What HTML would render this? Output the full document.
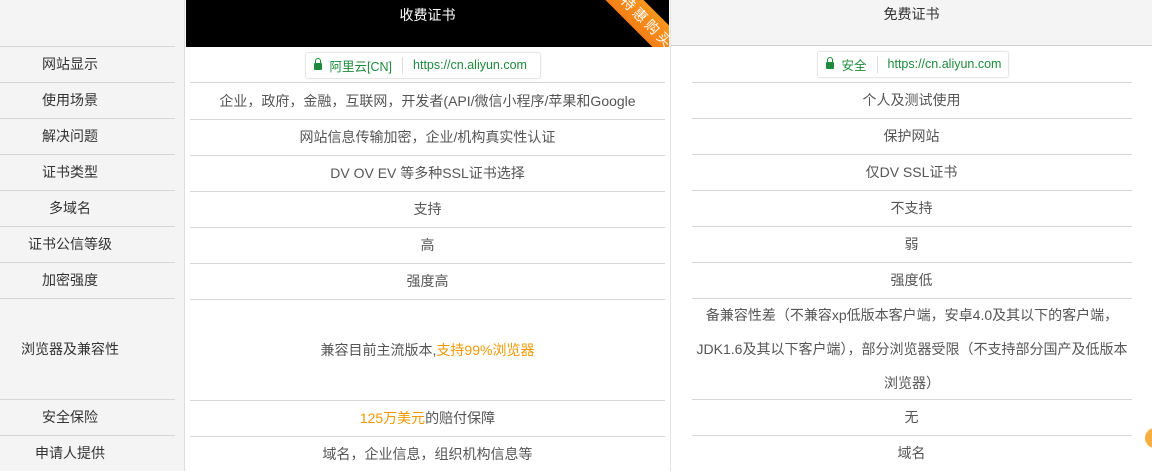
<!DOCTYPE html>
<html><head><meta charset="utf-8"><style>
*{margin:0;padding:0;box-sizing:border-box}
body{width:1152px;height:471px;overflow:hidden;background:#fff;font-family:"Liberation Sans","Noto Sans CJK SC",sans-serif;font-size:14px;color:#555;position:relative}
.col{position:absolute;top:0;height:471px}
#l{left:0;width:185px;background:#f4f4f4;border-right:1px solid #ddd}
#m{left:186px;width:483px;background:#fff}
#r{left:670px;width:482px;background:#fff;border-left:1px solid #e4e4e4}
.c{position:absolute;display:flex;align-items:center;justify-content:center;text-align:center;color:#555}
.ln{position:absolute;height:1px;background:#d6d6d6}
.o{color:#f39800}
.bar{display:inline-flex;align-items:center;height:27px;border:1px solid #e6e6e6;border-radius:3px;padding:0 8px;font-size:12.5px;color:#1e8a3c;white-space:nowrap;box-shadow:0 0 2px rgba(0,0,0,.05)}
.lock{display:inline-block;flex:none;width:8px;height:7px;background:#1e8a3c;border-radius:1px;position:relative;margin-right:8px;margin-top:3px}
.lock:before{content:"";position:absolute;left:1px;top:-5px;width:4px;height:5px;border:1.5px solid #1e8a3c;border-bottom:none;border-radius:3px 3px 0 0}
.sep{flex:none;width:1px;height:17px;background:#ddd;margin:0 10px}
</style></head><body>
<div class="col" id="l"></div>
<div class="col" id="m"></div>
<div class="col" id="r"></div>
<div style="position:absolute;left:186px;top:0;width:483px;height:47px;background:#000;overflow:hidden">
<div style="position:absolute;left:0;top:0;width:483px;height:30px;display:flex;align-items:center;justify-content:center;color:#fff;font-size:14px">收费证书</div>
<div style="position:absolute;left:396px;top:9px;width:130px;height:27px;background:linear-gradient(#f9961c,#f57f17);transform:rotate(45deg);color:#fff;font-size:14px;text-align:center;line-height:27px;letter-spacing:3px">特惠购买</div>
</div>
<div style="position:absolute;left:671px;top:0;width:481px;height:46px;background:#f4f4f4;border-bottom:1px solid #d0d0d0"></div>
<div class="c" style="left:671px;top:0;width:481px;height:28px;color:#333">免费证书</div>
<div class="ln" style="left:0;width:175px;top:46px"></div>
<div class="ln" style="left:0;width:175px;top:82px"></div>
<div class="ln" style="left:0;width:175px;top:118px"></div>
<div class="ln" style="left:0;width:175px;top:154px"></div>
<div class="ln" style="left:0;width:175px;top:190px"></div>
<div class="ln" style="left:0;width:175px;top:226px"></div>
<div class="ln" style="left:0;width:175px;top:262px"></div>
<div class="ln" style="left:0;width:175px;top:298px"></div>
<div class="ln" style="left:0;width:175px;top:399px"></div>
<div class="ln" style="left:0;width:175px;top:435px"></div>
<div class="ln" style="left:190px;width:475px;top:82px"></div>
<div class="ln" style="left:190px;width:475px;top:119px"></div>
<div class="ln" style="left:190px;width:475px;top:155px"></div>
<div class="ln" style="left:190px;width:475px;top:191px"></div>
<div class="ln" style="left:190px;width:475px;top:227px"></div>
<div class="ln" style="left:190px;width:475px;top:263px"></div>
<div class="ln" style="left:190px;width:475px;top:299px"></div>
<div class="ln" style="left:190px;width:475px;top:400px"></div>
<div class="ln" style="left:190px;width:475px;top:436px"></div>
<div class="ln" style="left:692px;width:440px;top:82px"></div>
<div class="ln" style="left:692px;width:440px;top:118px"></div>
<div class="ln" style="left:692px;width:440px;top:154px"></div>
<div class="ln" style="left:692px;width:440px;top:190px"></div>
<div class="ln" style="left:692px;width:440px;top:226px"></div>
<div class="ln" style="left:692px;width:440px;top:262px"></div>
<div class="ln" style="left:692px;width:440px;top:298px"></div>
<div class="ln" style="left:692px;width:440px;top:399px"></div>
<div class="ln" style="left:692px;width:440px;top:435px"></div>
<div class="c" style="left:0;width:140px;top:46px;height:36px;color:#333">网站显示</div>
<div class="c" style="left:0;width:140px;top:82px;height:36px;color:#333">使用场景</div>
<div class="c" style="left:0;width:140px;top:118px;height:36px;color:#333">解决问题</div>
<div class="c" style="left:0;width:140px;top:154px;height:36px;color:#333">证书类型</div>
<div class="c" style="left:0;width:140px;top:190px;height:36px;color:#333">多域名</div>
<div class="c" style="left:0;width:140px;top:226px;height:36px;color:#333">证书公信等级</div>
<div class="c" style="left:0;width:140px;top:262px;height:36px;color:#333">加密强度</div>
<div class="c" style="left:0;width:140px;top:298px;height:101px;color:#333">浏览器及兼容性</div>
<div class="c" style="left:0;width:140px;top:399px;height:36px;color:#333">安全保险</div>
<div class="c" style="left:0;width:140px;top:435px;height:36px;color:#333">申请人提供</div>
<div class="c" style="left:186px;width:483px;top:47px;height:36px"><span class="bar" style="width:236px;margin-right:10px"><span class="lock"></span>阿里云[CN]<span class="sep"></span>https://cn.aliyun.com</span></div>
<div class="c" style="left:186px;width:483px;top:82px;height:37px">企业，政府，金融，互联网，开发者(API/微信小程序/苹果和Google</div>
<div class="c" style="left:186px;width:483px;top:119px;height:36px">网站信息传输加密，企业/机构真实性认证</div>
<div class="c" style="left:186px;width:483px;top:155px;height:36px">DV OV EV 等多种SSL证书选择</div>
<div class="c" style="left:186px;width:483px;top:191px;height:36px">支持</div>
<div class="c" style="left:186px;width:483px;top:227px;height:36px">高</div>
<div class="c" style="left:186px;width:483px;top:263px;height:36px">强度高</div>
<div class="c" style="left:186px;width:483px;top:299px;height:101px">兼容目前主流版本,<span class="o">支持99%浏览器</span></div>
<div class="c" style="left:186px;width:483px;top:400px;height:36px"><span class="o">125万美元</span>的赔付保障</div>
<div class="c" style="left:186px;width:483px;top:436px;height:36px">域名，企业信息，组织机构信息等</div>
<div class="c" style="left:671px;width:481px;top:46px;height:36px"><span class="bar" style="width:192px;margin-left:2px"><span class="lock"></span>安全<span class="sep"></span>https://cn.aliyun.com</span></div>
<div class="c" style="left:671px;width:481px;top:82px;height:36px">个人及测试使用</div>
<div class="c" style="left:671px;width:481px;top:118px;height:36px">保护网站</div>
<div class="c" style="left:671px;width:481px;top:154px;height:36px">仅DV SSL证书</div>
<div class="c" style="left:671px;width:481px;top:190px;height:36px">不支持</div>
<div class="c" style="left:671px;width:481px;top:226px;height:36px">弱</div>
<div class="c" style="left:671px;width:481px;top:262px;height:36px">强度低</div>
<div class="c" style="left:692px;width:440px;top:299px;height:100px;line-height:34px">备兼容性差（不兼容xp低版本客户端，安卓4.0及其以下的客户端，JDK1.6及其以下客户端），部分浏览器受限（不支持部分国产及低版本浏览器）</div>
<div class="c" style="left:671px;width:481px;top:399px;height:36px">无</div>
<div class="c" style="left:671px;width:481px;top:435px;height:36px">域名</div>
<div style="position:absolute;left:1145px;top:428px;width:20px;height:20px;border-radius:50%;background:#f5b041"></div>
</body></html>
